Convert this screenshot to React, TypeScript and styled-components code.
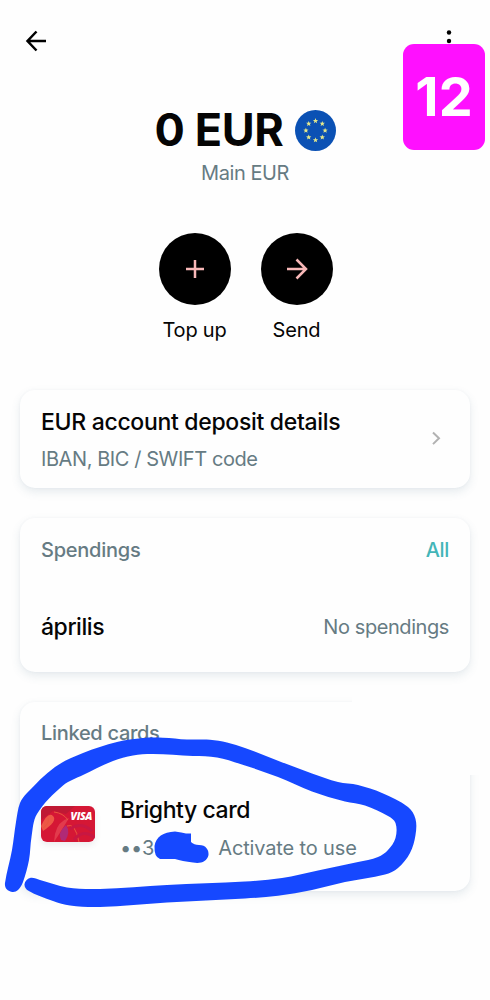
import React from 'react';
import styled, { createGlobalStyle } from 'styled-components';

const GlobalStyle = createGlobalStyle`
  * { box-sizing: border-box; }
  body { margin: 0; background: #fefefe; font-family: Inter, sans-serif; color: #050505; }
`;

const Screen = styled.main`
  position: relative;
  width: 490px;
  height: 1000px;
  overflow: hidden;
  background: #fefefe;
`;

const TopBar = styled.header`
  display: flex;
  justify-content: space-between;
  height: 82px;
  padding: 26px 26px 0 21px;
`;

const Balance = styled.section`
  display: flex;
  flex-direction: column;
  align-items: center;
  gap: 1px;
  padding-top: 20px;
  height: 151px;
`;

const Amount = styled.h1`
  display: flex;
  align-items: center;
  gap: 12px;
  height: 56px;
  margin: 0;
  padding-left: 1px;
  font-size: 45px;
  font-weight: 700;
  letter-spacing: -0.4px;
  line-height: 56px;
  white-space: nowrap;
`;

const Text = styled.span<{ $size?: number; $weight?: number; $tone?: string; $track?: number }>`
  font-size: ${p => p.$size ?? 20}px;
  font-weight: ${p => p.$weight ?? 400};
  color: ${p => p.$tone ?? '#050505'};
  letter-spacing: ${p => p.$track ?? 0}px;
  line-height: 28px;
  white-space: nowrap;
`;

const Actions = styled.section`
  display: flex;
  justify-content: center;
  gap: 30px;
  height: 157px;
  padding-left: 1px;
`;

const Action = styled.div`
  display: flex;
  flex-direction: column;
  align-items: center;
  gap: 11px;
  width: 72px;
`;

const RoundButton = styled.button`
  display: grid;
  place-items: center;
  width: 72px;
  height: 72px;
  padding: 0;
  border: 0;
  border-radius: 50%;
  background: #000;
`;

const Cards = styled.section`
  display: flex;
  flex-direction: column;
  gap: 30px;
  padding: 0 20px;
`;

const Card = styled.article<{ $height: number }>`
  height: ${p => p.$height}px;
  padding: 0 21px;
  border-radius: 15px;
  background: #fefefe;
  box-shadow: 0 4px 10px rgba(70, 105, 130, 0.13), 0 0 3px rgba(70, 105, 130, 0.05);
`;

const Row = styled.div<{ $top?: number }>`
  display: flex;
  justify-content: space-between;
  align-items: center;
  padding-top: ${p => p.$top ?? 0}px;
`;

const Stack = styled.div<{ $gap: number }>`
  display: flex;
  flex-direction: column;
  gap: ${p => p.$gap}px;
`;

const Chevron = styled.svg`
  margin: 0 -1px 5px 0;
`;

const LinkedCard = styled.div`
  display: flex;
  gap: 25px;
  padding-top: 49px;
`;

const CardArt = styled.div`
  position: relative;
  flex: none;
  width: 54px;
  height: 36px;
  margin-top: 10px;
  border-radius: 6px;
  overflow: hidden;
  box-shadow: 0 3px 6px rgba(80, 80, 100, 0.1);
`;

const Visa = styled.span`
  position: absolute;
  top: 4px;
  right: 3px;
  color: #fff;
  font: italic 800 10.5px/13px "Open Sans", sans-serif;
  letter-spacing: -0.4px;
`;

const CardMeta = styled.div`
  display: flex;
  gap: 64px;
`;

const Badge = styled.div`
  position: absolute;
  left: 403px;
  top: 44px;
  width: 82px;
  height: 106px;
  border-radius: 11px;
  background: #ff10ff;
  color: #fff;
  font: 700 54px/105px Inter, sans-serif;
  text-align: center;
`;

const Cover = styled.div`
  position: absolute;
  left: 352px;
  top: 688px;
  width: 138px;
  height: 87px;
  background: #fefefe;
`;

const Ink = styled.svg`
  position: absolute;
  inset: 0;
  pointer-events: none;
`;

const muted = '#667b83';

type Point = [number, number];

const loop: Point[] = [
  [5, 883], [12, 850], [16, 822], [20, 803], [27, 793], [55, 767], [83, 753], [117, 742], [143, 738], [163, 737.7],
  [187, 739.5], [210, 739.7], [227, 742.5], [245, 748], [278, 760.7], [312, 773.5], [338, 782], [358, 785],
  [382, 793], [408, 807], [415.5, 819], [415.5, 835], [410, 853], [398, 868], [385, 874.5], [345, 882],
  [312, 890], [278, 895.7], [245, 898.5], [167, 902.5], [100, 907], [70, 905.5], [53, 901], [28, 890.5],
  [24.5, 884], [30, 878], [40, 880], [67, 887.5], [100, 889], [167, 885], [245, 881.5], [282, 878],
  [318, 870.5], [358, 862], [378, 857], [388, 850], [395.5, 838], [395.5, 823], [388, 816], [365, 805.5],
  [345, 801.5], [312, 791.5], [278, 777], [245, 765.5], [217, 757.5], [193, 756], [153, 754], [133, 755.5],
  [113, 761], [83, 775], [63, 785.5], [37, 814], [31.5, 837], [29, 860], [23, 882], [18, 890], [12.7, 892], [6.5, 889],
];

const smooth = (pts: Point[]) => {
  const n = pts.length;
  let d = `M${pts[0][0]} ${pts[0][1]}`;
  for (let i = 0; i < n; i++) {
    const a = pts[(i + n - 1) % n], b = pts[i], c = pts[(i + 1) % n], e = pts[(i + 2) % n];
    const len = Math.hypot(c[0] - b[0], c[1] - b[1]);
    const tangent = (p: Point, q: Point): Point => {
      const l = Math.hypot(q[0] - p[0], q[1] - p[1]) || 1;
      return [((q[0] - p[0]) / l) * len / 3, ((q[1] - p[1]) / l) * len / 3];
    };
    const t1 = tangent(a, c), t2 = tangent(b, e);
    d += `C${b[0] + t1[0]} ${b[1] + t1[1]} ${c[0] - t2[0]} ${c[1] - t2[1]} ${c[0]} ${c[1]}`;
  }
  return d + 'Z';
};

const star = (cx: number, cy: number) =>
  Array.from({ length: 10 }, (_, i) => {
    const r = i % 2 ? 1.2 : 2.8;
    const t = -Math.PI / 2 + (i * Math.PI) / 5;
    return `${cx + r * Math.cos(t)},${cy + r * Math.sin(t)}`;
  }).join(' ');

const Flag = () => (
  <svg width="41" height="41" viewBox="0 0 41 41">
    <circle cx="20.5" cy="20.5" r="20.5" fill="#0b51b4" />
    {Array.from({ length: 8 }, (_, i) => (
      <polygon key={i} fill="#e4e88c"
        points={star(20.5 + 9.6 * Math.sin((i * Math.PI) / 4), 20.5 - 9.6 * Math.cos((i * Math.PI) / 4))} />
    ))}
  </svg>
);

export default function App() {
  return (
    <Screen>
      <GlobalStyle />
      <TopBar>
        <svg width="30" height="30" fill="none" stroke="#000" strokeWidth="2.5">
          <path d="M25 15H6.500M15.500 5.500L6.500 15l9 9.500" />
        </svg>
        <svg width="30" height="30" fill="#000">
          <circle cx="15" cy="6.500" r="2.200" />
          <circle cx="15" cy="15" r="2.200" />
          <circle cx="15" cy="23.500" r="2.200" />
        </svg>
      </TopBar>

      <Balance>
        <Amount>0 EUR <Flag /></Amount>
        <Text $tone={muted} $track={-0.45}>Main EUR</Text>
      </Balance>

      <Actions>
        <Action>
          <RoundButton aria-label="Top up">
            <svg width="30" height="30" fill="none" stroke="#f8b8b8" strokeWidth="2.500">
              <path d="M6 15h18M15 6v18" />
            </svg>
          </RoundButton>
          <Text $track={-0.2}>Top up</Text>
        </Action>
        <Action>
          <RoundButton aria-label="Send">
            <svg width="30" height="30" fill="none" stroke="#f8b8b8" strokeWidth="2.500">
              <path d="M5 15h19M14.500 5.500L24 15l-9.500 9.500" />
            </svg>
          </RoundButton>
          <Text $track={-0.2}>Send</Text>
        </Action>
      </Actions>

      <Cards>
        <Card $height={98}>
          <Row $top={18}>
            <Stack $gap={9}>
              <Text $size={23} $weight={500} $track={-0.31}>EUR account deposit details</Text>
              <Text $tone={muted} $track={-0.42}>IBAN, BIC / SWIFT code</Text>
            </Stack>
            <Chevron width="26" height="26" fill="none" stroke="#b2b2b2" strokeWidth="2">
              <path d="M9 7.500l6 5.800-6 5.800" />
            </Chevron>
          </Row>
        </Card>

        <Card $height={154}>
          <Row $top={18}>
            <Text $tone={muted} $weight={500} $track={-0.25}>Spendings</Text>
            <Text $tone="#43b5b8" $weight={500} $track={-0.3}>All</Text>
          </Row>
          <Row $top={49}>
            <Text $size={23} $weight={500} $track={-0.45}>április</Text>
            <Text $tone={muted} $track={-0.42}>No spendings</Text>
          </Row>
        </Card>

        <Card $height={189}>
          <Row $top={17}>
            <Text $tone={muted} $weight={500} $track={-0.3}>Linked cards</Text>
          </Row>
          <LinkedCard>
            <CardArt>
              <svg width="54" height="36">
                <rect width="54" height="36" fill="#d51735" />
                <path d="M0 0h34L25 8 12 5 0 14z" fill="#bf1934" />
                <path d="M0 20Q7 5 12 10T2 25Z" fill="#ed5846" />
                <path d="M14 28Q17 15 28 12 21 24 13 36Z" fill="#e23a4c" />
                <path d="M20 34Q16 27 25 19 30 26 24 35Z" fill="#b02a76" />
                <path d="M2 22Q9 17 7 12M26 20Q34 16 38 36M13 6Q22 7 27 14" fill="none" stroke="#e8583f" strokeWidth="1" />
                <path d="M29 23Q40 15 51 25M33 34Q42 22 54 32" fill="none" stroke="#c81742" strokeWidth="3" />
              </svg>
              <Visa>VISA</Visa>
            </CardArt>
            <Stack $gap={10}>
              <Text $size={23} $weight={500} $track={-0.42}>Brighty card</Text>
              <CardMeta>
                <Text $tone={muted} $track={-0.2}>••3</Text>
                <Text $tone={muted} $track={-0.15}>Activate to use</Text>
              </CardMeta>
            </Stack>
          </LinkedCard>
        </Card>
      </Cards>

      <Cover />
      <Badge>12</Badge>
      <Ink width="490" height="1000" fill="#1648ff">
        <path d={smooth(loop)} />
        <path d="M154.500 846C156 837 163 832 175 831.500Q182 832.500 186 833.500L191 833.500V842Q194 845 199 845C206 845 209 850 208.500 855C207 862 200 864 193 862.500Q182 861 175 859H160Q154 857 154.500 846Z" />
      </Ink>
    </Screen>
  );
}
